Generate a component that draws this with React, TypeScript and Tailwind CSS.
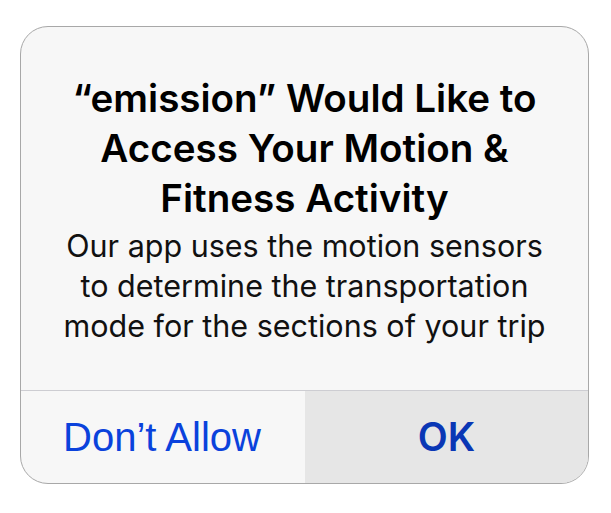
export default function App() {
  return (
    <div className="w-[611px] h-[513px] bg-white pt-[26px] pl-[20px]" style={{ fontFamily: "Inter, 'Liberation Sans', sans-serif" }}>
      <div className="w-[569px] h-[458px] rounded-[28px] border border-[#a8a8a8] bg-[#f7f7f7] overflow-hidden flex flex-col">
        <div className="flex-1 flex flex-col items-center pt-[46px] text-center">
          <h1 className="text-[38.6px] leading-[50px] font-semibold text-black whitespace-nowrap">
            “emission” Would Like to
            <br />
            Access Your Motion &amp;
            <br />
            Fitness Activity
          </h1>
          <p className="mt-[3px] text-[30.5px] leading-[40px] text-[#111] whitespace-nowrap">
            Our app uses the motion sensors
            <br />
            to determine the transportation
            <br />
            mode for the sections of your trip
          </p>
        </div>
        <div className="h-[93px] border-t border-[#cdcdd2] flex">
          <button
            className="w-[284px] pr-[2px] text-[40px] text-[#0a42dc]"
            style={{ fontFamily: "'Liberation Sans', sans-serif" }}
          >
            Don’t Allow
          </button>
          <button className="flex-1 bg-[#e6e6e6] text-[39px] font-semibold text-[#0a37b5]">OK</button>
        </div>
      </div>
    </div>
  );
}
